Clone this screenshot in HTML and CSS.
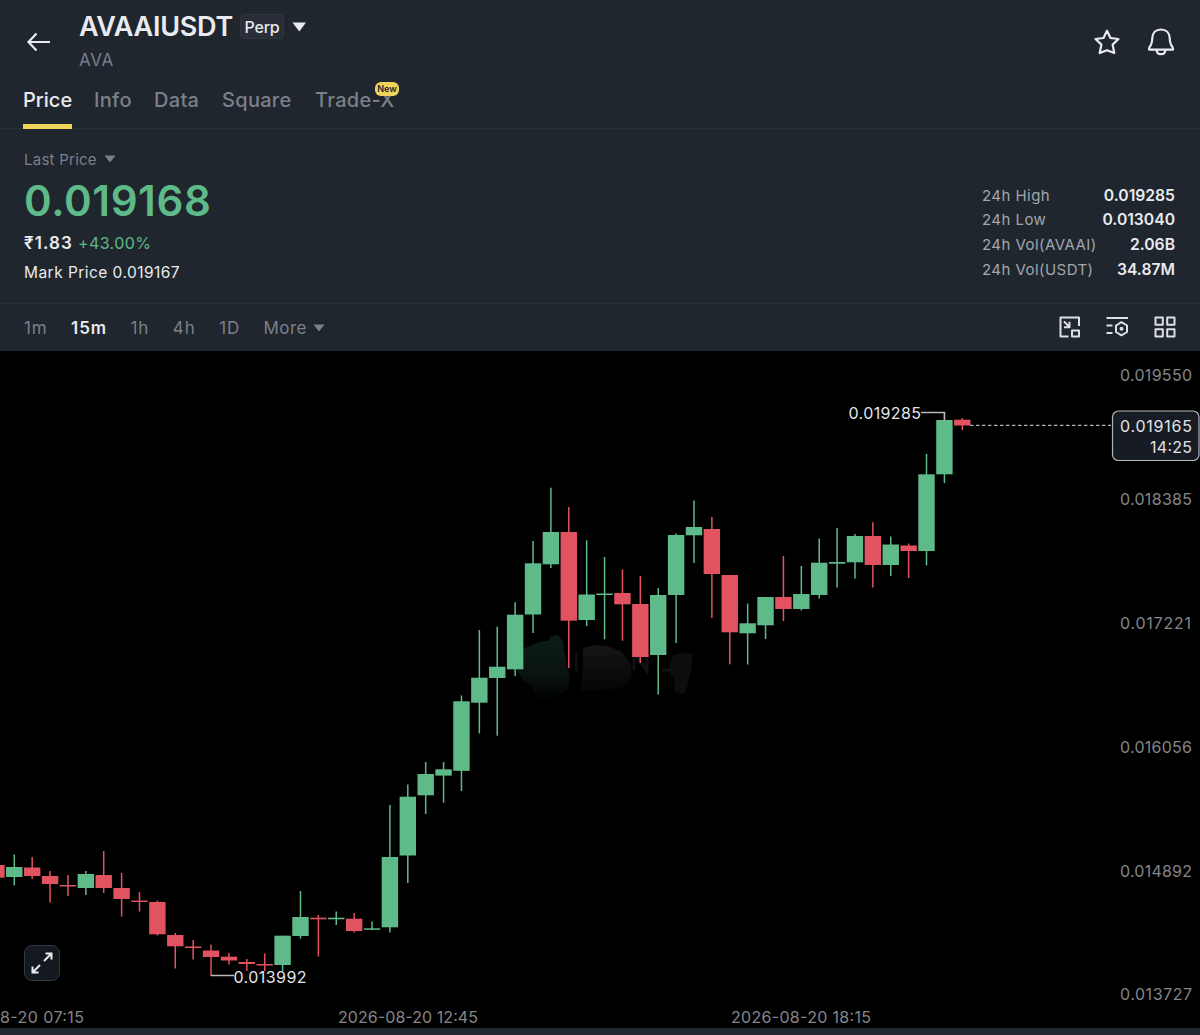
FILE: index.html
```
<!DOCTYPE html>
<html lang="en">
<head>
  <meta charset="UTF-8">
  <meta name="viewport" content="width=device-width, initial-scale=1.0">
  <title>AVAAIUSDT Perp</title>
  <link rel="stylesheet" href="styles.css">
</head>
<body>
  <header class="header">
    <svg class="back" width="26" height="22" viewBox="0 0 26 22"><path d="M24 11H3M10.500 2.500L2.500 11l8 8.500"/></svg>
    <div class="pair">
      <div class="pair-row">
        <h1>AVAAIUSDT</h1>
        <span class="perp">Perp</span>
        <svg class="caret" width="15" height="10" viewBox="0 0 15 10"><path d="M.500.500h13.500L7.300 9.500z"/></svg>
      </div>
      <div class="pair-sub">AVA</div>
    </div>
    <div class="header-icons">
      <svg width="28" height="28" viewBox="0 0 28 28"><path d="M14 2.700l3.500 7.300 8 1-5.900 5.600 1.700 8.400-7.300-2.800-7.300 2.800 1.700-8.400L2.500 11l8-1z"/></svg>
      <svg width="28" height="28" viewBox="0 0 28 28"><path d="M14 1.500c-5.200 0-8.400 3.400-8.700 8.500-.2 5.500-1.200 7-2.500 8.600-.6.800-.8 1.900-.8 3h24c0-1.100-.2-2.200-.8-3-1.300-1.600-2.300-3.100-2.500-8.600-.3-5.100-3.500-8.500-8.700-8.500zM9.700 22c0 2.600 1.800 4.200 4.300 4.200s4.300-1.600 4.300-4.200"/></svg>
    </div>
  </header>

  <nav class="tabs">
    <a class="tab tab-price active">Price</a>
    <a class="tab tab-info">Info</a>
    <a class="tab tab-data">Data</a>
    <a class="tab tab-square">Square</a>
    <a class="tab tab-trade">Trade-X<span class="new">New</span></a>
  </nav>

  <section class="summary">
    <div class="price">
      <div class="last">Last Price <svg width="12" height="8" viewBox="0 0 12 8"><path d="M.500.500h11L6 7.500z"/></svg></div>
      <div class="big">0.019168</div>
      <div class="change"><b>₹1.83</b><span>+43.00%</span></div>
      <div class="mark">Mark Price 0.019167</div>
    </div>
    <dl class="stats">
      <dt>24h High</dt><dd>0.019285</dd>
      <dt>24h Low</dt><dd>0.013040</dd>
      <dt>24h Vol(AVAAI)</dt><dd>2.06B</dd>
      <dt>24h Vol(USDT)</dt><dd>34.87M</dd>
    </dl>
  </section>

  <div class="toolbar">
    <div class="intervals">
      <span>1m</span>
      <span class="active">15m</span>
      <span>1h</span>
      <span>4h</span>
      <span>1D</span>
      <span class="more">More <svg width="12" height="8" viewBox="0 0 12 8"><path d="M.500.500h11L6 7.500z"/></svg></span>
    </div>
    <div class="tools">
      <svg width="24" height="24" viewBox="0 0 24 24"><path d="M11.500 21.500H3.500v-19h18.500V11M7 6.500l5 5M12.500 6.800v5.500H7M15 15.500h7v6h-7z"/></svg>
      <svg width="24" height="24" viewBox="0 0 24 24"><path d="M1.500 3h21.500M1.500 10.500h6M1.500 18h6M16.500 7.200l5.500 3.300v6.500l-5.500 3.300-5.500-3.300v-6.500z"/><circle class="dot" cx="16.500" cy="13.700" r="2"/></svg>
      <svg width="24" height="24" viewBox="0 0 24 24"><path d="M2.500 2.500h7.300v7.300H2.500zM14.200 2.500h7.300v7.300h-7.300zM2.500 14.200h7.300v7.300H2.500zM14.200 14.200h7.300v7.300h-7.300z"/></svg>
    </div>
  </div>

  <main class="chart">
    <svg id="chart" width="1200" height="677" viewBox="0 351 1200 677">
      <defs>
        <linearGradient id="fadeGreen" x1="0" y1="0" x2="0" y2="1">
          <stop offset="0" stop-color="#0c1c17"/>
          <stop offset=".6" stop-color="#09130f"/>
          <stop offset="1" stop-color="#000"/>
        </linearGradient>
        <linearGradient id="fadeGray" x1="0" y1="0" x2="0" y2="1">
          <stop offset="0" stop-color="#171515"/>
          <stop offset="1" stop-color="#050505"/>
        </linearGradient>
      </defs>
      <g class="watermark">
        <path fill="url(#fadeGreen)" d="M525 648l14-6 9-1 3-5 7-1 5 7 1 9 6 26-2 13-11 7-12 4-9-2-4-12-8-6-7-10 3-18z"/>
        <path fill="url(#fadeGray)" d="M583 648l12-3 12 1 15 6 9 13 1 12-8 10-20 3-23 1 2-24z"/>
        <path fill="#0d0d0d" d="M575 652h3v19h-3zM674 654l18-1v13l-4 18-4 10-9-2-1-14-6-8z"/>
        <path class="watermark-line" d="M634 671v-18l13 18v-18M662 670h12"/>
      </g>
      <g id="candles"></g>
      <path class="callout" d="M921 412.500h23.500v8M211 975.500h23"/>
      <path class="price-line" d="M970 425.300h141"/>
      <rect class="price-box" x="1112.500" y="411" width="86.500" height="49.500" rx="6"/>
      <g class="bright">
        <text x="848.500" y="418.700" textLength="72.500">0.019285</text>
        <text x="233.500" y="982.700" textLength="73">0.013992</text>
        <text x="1120" y="431.500" textLength="72">0.019165</text>
        <text x="1150" y="453" textLength="42">14:25</text>
      </g>
      <g class="axis">
        <text x="1120" y="381.300" textLength="72">0.019550</text>
        <text x="1120" y="505.300" textLength="72">0.018385</text>
        <text x="1120" y="629.300" textLength="71">0.017221</text>
        <text x="1120" y="753.300" textLength="72">0.016056</text>
        <text x="1120" y="877.300" textLength="72">0.014892</text>
        <text x="1120" y="1000.300" textLength="72">0.013727</text>
        <text x="0" y="1022.800" textLength="84">8-20 07:15</text>
        <text x="338" y="1022.800" textLength="140">2026-08-20 12:45</text>
        <text x="731" y="1022.800" textLength="140">2026-08-20 18:15</text>
      </g>
    </svg>
    <button class="expand" aria-label="Full screen">
      <svg width="24" height="24" viewBox="0 0 24 24"><path d="M14 10l7.500-7.500M15.500 2.500h6v6M10 14l-7.500 7.500M2.500 15.500v6h6"/></svg>
    </button>
  </main>
  <footer class="bottom"></footer>

  <script>
    // [direction, high, body top, body bottom, low]
    const candles = [
      ["r", 865, 865, 877.7, 877.7], ["g", 854.5, 867, 877, 885.5], ["r", 857, 867.5, 876, 879],
      ["r", 871, 876, 884, 902.5], ["r", 875, 885, 886.5, 896], ["g", 871, 874, 888, 895],
      ["r", 851, 875, 888, 893], ["r", 873, 888, 899, 916.5], ["r", 892, 900.5, 902, 911.5],
      ["r", 900.5, 902, 934.3, 935.5], ["r", 933, 935, 946.3, 968.5], ["r", 940, 946.5, 948, 959.5],
      ["r", 944.5, 950.5, 957, 976], ["r", 953, 956.7, 960.5, 964.5], ["r", 959, 962, 964, 971],
      ["r", 953.5, 964, 965.5, 971], ["g", 935.7, 935.7, 965, 971], ["g", 891, 917, 936, 938.5],
      ["r", 915, 917.7, 919.3, 956.5], ["g", 911.5, 917.7, 919.3, 925], ["r", 913, 918.7, 931, 932.5],
      ["g", 921.5, 928.3, 929.8, 930], ["g", 805, 857, 927.3, 932.5], ["g", 784.5, 796.7, 855.5, 883],
      ["g", 762, 774, 795.3, 814], ["g", 762, 769.3, 775.6, 802.7], ["g", 695.5, 701.3, 770.8, 791],
      ["g", 630, 677.7, 702.7, 733.5], ["g", 626.7, 666.7, 678, 735.7], ["g", 602.3, 614.7, 669.3, 676],
      ["g", 541, 563.3, 614.5, 633], ["g", 487.7, 532, 564.3, 568], ["r", 507, 532, 620.7, 668],
      ["g", 540.3, 594.5, 620, 626], ["g", 557, 593.5, 595, 639.3], ["r", 569.5, 593, 604.3, 640.7],
      ["r", 576, 604, 657, 663], ["g", 588, 595, 655, 694.5], ["g", 533.5, 535, 595, 643],
      ["g", 500.5, 527, 535.3, 563], ["r", 517, 529, 574, 618], ["r", 575, 575, 632.3, 664.3],
      ["g", 603.5, 623.3, 633.3, 664.5], ["g", 597, 597, 625.3, 639], ["r", 556, 597, 609, 621],
      ["g", 566, 594, 609, 610.5], ["g", 538.5, 562.7, 595, 598.5], ["g", 528, 562, 563.7, 587.5],
      ["g", 534, 536, 562.3, 578.5], ["r", 522.3, 536, 565, 587.5], ["g", 536.5, 544.5, 565, 576],
      ["r", 543.5, 545.5, 551, 578], ["g", 454, 474.3, 551, 565.5], ["g", 412, 420, 474.3, 483],
      ["r", 418, 419.7, 425.5, 430]
    ];
    const step = 17.887;
    const width = 16.4;

    document.getElementById("candles").innerHTML = candles.map(([dir, high, top, bottom, low], i) => {
      const x = -3.6 + i * step;
      return `<g class="${dir}">
        <rect x="${x - 0.75}" y="${high}" width="1.5" height="${low - high}"/>
        <rect x="${x - width / 2}" y="${top}" width="${width}" height="${bottom - top}"/>
      </g>`;
    }).join("");
  </script>
</body>
</html>
```
FILE: styles.css
```
* {
  box-sizing: border-box;
  margin: 0;
  padding: 0;
}
body {
  width: 1200px;
  height: 1035px;
  overflow: hidden;
  font-family: Inter, "Noto Sans", sans-serif;
  background: #20262d;
  color: #e9ebf0;
}
svg {
  display: block;
  flex: none;
}

/* Header */
.header {
  display: flex;
  height: 78px;
  padding: 0 25px 0 26px;
}
.back {
  margin-top: 31px;
  fill: none;
  stroke: #e9ebf0;
  stroke-width: 2.2;
}
.pair {
  margin: 10px 0 0 27px;
}
.pair-row {
  display: flex;
  align-items: center;
  height: 33px;
}
h1 {
  width: 153px;
  font-size: 27px;
  font-weight: 600;
  letter-spacing: -0.25px;
}
.perp {
  width: 44px;
  height: 25px;
  margin-left: 8px;
  border: 1px solid #2f353f;
  border-radius: 4px;
  background: #282d37;
  font-size: 16px;
  font-weight: 500;
  line-height: 24px;
  text-align: center;
  letter-spacing: -0.2px;
}
.caret {
  margin-left: 8px;
  fill: #e9ebf0;
}
.pair-sub {
  margin-top: 6px;
  color: #7b808a;
  font-size: 17px;
  line-height: 22px;
  letter-spacing: 0.7px;
}
.header-icons {
  display: flex;
  gap: 26px;
  margin: 28px 0 0 auto;
}
.header-icons svg {
  fill: none;
  stroke: #e9ebf0;
  stroke-width: 2.2;
  stroke-linejoin: round;
}

/* Tabs */
.tabs {
  display: flex;
  gap: 22px;
  height: 51px;
  padding-left: 23px;
  border-bottom: 1px solid #2a2f37;
}
.tab {
  position: relative;
  color: #7b808a;
  font-size: 20px;
  font-weight: 500;
  line-height: 45px;
  white-space: nowrap;
  letter-spacing: 0.3px;
}
.tab.active {
  height: 51px;
  border-bottom: 5px solid #efd35b;
  color: #e9ebf0;
  letter-spacing: 0;
}
.tab-price { width: 49px; }
.tab-info { width: 38px; }
.tab-data { width: 46px; }
.tab-square { width: 71px; }
.new {
  position: absolute;
  top: 4px;
  left: 60px;
  width: 24px;
  height: 14px;
  border-radius: 6px;
  background: #efd35b;
  color: #20262d;
  font-size: 9px;
  font-weight: 600;
  line-height: 14px;
  text-align: center;
  letter-spacing: 0;
}

/* Price summary */
.summary {
  display: flex;
  justify-content: space-between;
  height: 174px;
  padding: 19px 25px 0 24px;
}
.last {
  display: flex;
  align-items: center;
  gap: 7px;
  height: 22px;
  color: #7b808a;
  font-size: 15px;
  letter-spacing: 0.25px;
}
.last svg,
.more svg {
  fill: #7b808a;
}
.big {
  height: 63px;
  color: #5fba89;
  font-size: 42px;
  font-weight: 600;
  line-height: 62px;
  letter-spacing: 0.6px;
}
.change {
  display: flex;
  gap: 5px;
  height: 20px;
  font-size: 17px;
  line-height: 20px;
}
.change b {
  font-weight: 600;
  letter-spacing: 1.1px;
}
.change span {
  color: #5fba89;
  font-size: 16px;
  letter-spacing: 0.4px;
}
.mark {
  margin-top: 10px;
  font-size: 15.5px;
  line-height: 20px;
  letter-spacing: 0.45px;
}
.stats {
  display: grid;
  grid-template-columns: 115px 78px;
  grid-auto-rows: 24.700px;
  width: 193px;
  margin-top: 34.500px;
  font-size: 16px;
  line-height: 25px;
  white-space: nowrap;
}
.stats dt {
  color: #a2a6ad;
  font-size: 15px;
  letter-spacing: 0.45px;
}
.stats dd {
  font-size: 15.7px;
  font-weight: 600;
  text-align: right;
}

/* Interval toolbar */
.toolbar {
  display: flex;
  justify-content: space-between;
  align-items: center;
  height: 48px;
  padding: 0 23px 0 24px;
  border-top: 1px solid #2a2f37;
}
.intervals {
  display: flex;
  gap: 23.500px;
  color: #7b808a;
  font-size: 17px;
  letter-spacing: 0.9px;
}
.intervals .active {
  color: #e9ebf0;
  font-weight: 600;
}
.more {
  display: flex;
  align-items: center;
  gap: 6px;
  letter-spacing: 0.4px;
}
.tools {
  display: flex;
  gap: 24px;
  margin-bottom: 2px;
}
.tools svg {
  fill: none;
  stroke: #dcdfe6;
  stroke-width: 2;
  stroke-linejoin: round;
}
.tools .dot {
  fill: #dcdfe6;
  stroke: none;
}

/* Chart */
.chart {
  position: relative;
  height: 677px;
  background: #000;
}
#chart text {
  font-size: 16px;
}
.g { fill: #5fba89; }
.r { fill: #e15361; }
.axis { fill: #83868b; }
.bright { fill: #e2e4e8; }
.callout {
  fill: none;
  stroke: #b5bab8;
  stroke-width: 1.3;
}
.price-line {
  stroke: #aeb0b3;
  stroke-width: 1.3;
  stroke-dasharray: 3.500 2.500;
}
.price-box {
  fill: #171b23;
  stroke: #b4b6ba;
  stroke-width: 1.2;
}
.watermark-line {
  fill: none;
  stroke: #111;
  stroke-width: 3;
}
.expand {
  position: absolute;
  left: 24px;
  top: 594px;
  display: flex;
  align-items: center;
  justify-content: center;
  width: 36px;
  height: 36px;
  border: 1px solid #333841;
  border-radius: 8px;
  background: #14181f;
}
.expand svg {
  fill: none;
  stroke: #e9ebf0;
  stroke-width: 2;
}
.bottom {
  height: 7px;
  background: #22262f;
}
```
